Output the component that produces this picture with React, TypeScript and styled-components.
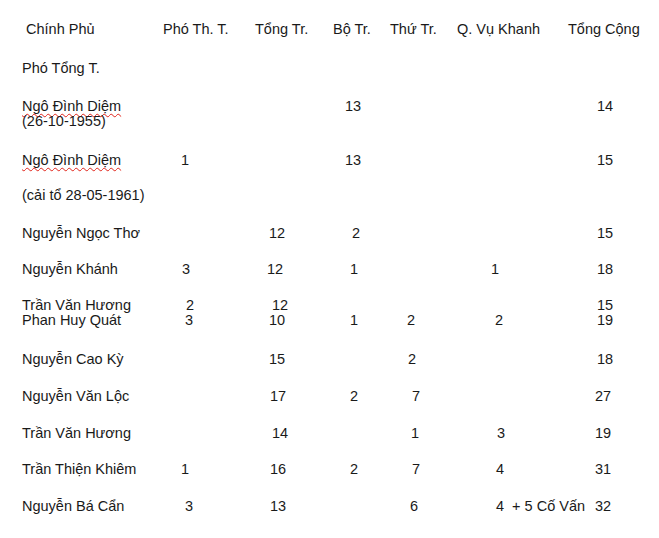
import React from "react";
import styled, { createGlobalStyle } from "styled-components";

const GlobalStyle = createGlobalStyle`
  html, body {
    margin: 0;
    padding: 0;
    background: #ffffff;
  }
  body {
    font-family: "Liberation Sans", Arial, sans-serif;
    font-size: 14.5px;
    line-height: 15px;
    color: #1a1a1a;
  }
`;

const COL_STARTS = [22, 160, 250, 330, 388, 455, 565];

const Page = styled.div`
  width: 659px;
  height: 538px;
  box-sizing: border-box;
  padding: 22px 0 0 22px;
  display: flex;
  flex-direction: column;
  overflow: hidden;
`;

const Row = styled.div<{ $gap: number }>`
  display: grid;
  grid-template-columns: 138px 90px 80px 58px 67px 110px 1fr;
  margin-top: ${(p) => p.$gap}px;
`;

const Cell = styled.div<{ $indent: number }>`
  padding-left: ${(p) => p.$indent}px;
  white-space: pre;
`;

const Misspelled = styled.span`
  text-decoration-line: underline;
  text-decoration-style: wavy;
  text-decoration-color: #e0241b;
  text-decoration-thickness: 1px;
  text-underline-offset: 2px;
  text-decoration-skip-ink: none;
`;

type Entry = [React.ReactNode, number] | null;

interface RowData {
  gap: number;
  cells: Entry[];
}

const diem = <Misspelled>Ngô Đình Diệm</Misspelled>;

const rows: RowData[] = [
  {
    gap: 0,
    cells: [
      ["Chính Phủ", 26],
      ["Phó Th. T.", 163],
      ["Tổng Tr.", 255],
      ["Bộ Tr.", 333],
      ["Thứ Tr.", 390],
      ["Q. Vụ Khanh", 457],
      ["Tổng Cộng", 568],
    ],
  },
  { gap: 24, cells: [["Phó Tổng T.", 22], null, null, null, null, null, null] },
  {
    gap: 23,
    cells: [
      [
        <>
          {diem}
          {"\n(26-10-1955)"}
        </>,
        22,
      ],
      null,
      null,
      ["13", 345],
      null,
      null,
      ["14", 597],
    ],
  },
  { gap: 24, cells: [[diem, 22], ["1", 181], null, ["13", 345], null, null, ["15", 597]] },
  { gap: 20, cells: [["(cải tổ 28-05-1961)", 22], null, null, null, null, null, null] },
  { gap: 23, cells: [["Nguyễn Ngọc Thơ", 22], null, ["12", 269], ["2", 352], null, null, ["15", 597]] },
  {
    gap: 21,
    cells: [["Nguyễn Khánh", 22], ["3", 182], ["12", 267], ["1", 350], null, ["1", 491], ["18", 597]],
  },
  { gap: 21, cells: [["Trần Văn Hương", 22], ["2", 186], ["12", 272], null, null, null, ["15", 597]] },
  {
    gap: 0,
    cells: [["Phan Huy Quát", 22], ["3", 185], ["10", 269], ["1", 350], ["2", 407], ["2", 495], ["19", 597]],
  },
  { gap: 24, cells: [["Nguyễn Cao Kỳ", 22], null, ["15", 269], null, ["2", 408], null, ["18", 597]] },
  {
    gap: 22,
    cells: [["Nguyễn Văn Lộc", 22], null, ["17", 270], ["2", 350], ["7", 412], null, ["27", 595]],
  },
  {
    gap: 22,
    cells: [["Trần Văn Hương", 22], null, ["14", 272], null, ["1", 411], ["3", 497], ["19", 595]],
  },
  {
    gap: 21,
    cells: [["Trần Thiện Khiêm", 22], ["1", 181], ["16", 270], ["2", 350], ["7", 412], ["4", 496], ["31", 595]],
  },
  {
    gap: 22,
    cells: [["Nguyễn Bá Cẩn", 22], ["3", 185], ["13", 270], null, ["6", 410], ["4  + 5 Cố Vấn", 496], ["32", 595]],
  },
];

export default function App() {
  return (
    <>
      <GlobalStyle />
      <Page>
        {rows.map((row, ri) => (
          <Row key={ri} $gap={row.gap}>
            {row.cells.map((c, ci) => (
              <Cell key={ci} $indent={c ? Math.max(0, c[1] - COL_STARTS[ci]) : 0}>
                {c ? c[0] : ""}
              </Cell>
            ))}
          </Row>
        ))}
      </Page>
    </>
  );
}
